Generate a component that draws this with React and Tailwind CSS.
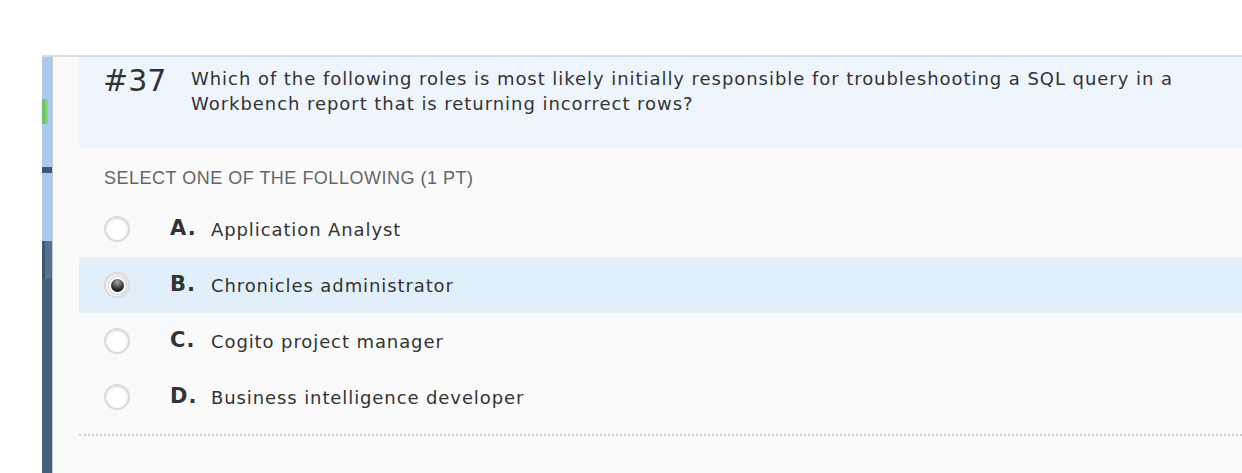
import { useState } from "react";

const options = [
  { key: "A", text: "Application Analyst" },
  { key: "B", text: "Chronicles administrator" },
  { key: "C", text: "Cogito project manager" },
  { key: "D", text: "Business intelligence developer" },
];

function Radio({ checked }) {
  return (
    <span className="flex h-[26px] w-[26px] shrink-0 items-center justify-center rounded-full border-2 border-[#dadada] bg-white shadow-[inset_0_1px_3px_rgba(0,0,0,0.15)]">
      {checked && (
        <span className="h-[13px] w-[13px] rounded-full bg-[radial-gradient(circle_at_50%_25%,#a5a5a5,#1a1a1a_70%)] shadow-[0_0_0_2px_#ffffff,0_0_0_3px_#cfcfcf]" />
      )}
    </span>
  );
}

export default function App() {
  const [selected, setSelected] = useState("B");

  return (
    <div className="h-[473px] w-[1242px] overflow-hidden bg-white font-['DejaVu_Sans',Verdana,sans-serif]">
      <div className="h-[55px]" />
      <div className="ml-[42px] flex h-[418px] border-t-2 border-[#dcdcdc]">
        {/* left rail */}
        <div className="flex w-[10px] flex-col bg-[#a9c9ee]">
          <div className="h-[42px]" />
          <div className="h-[25px] w-[6px] bg-[linear-gradient(90deg,#5fbf5a,#8ed887)]" />
          <div className="h-[43px]" />
          <div className="h-[6px] bg-[#3f5874]" />
          <div className="h-[68px]" />
          <div className="flex h-[38px]">
            <div className="w-[3px] bg-[#3e5673]" />
            <div className="flex-1 bg-[#55718f]" />
          </div>
          <div className="flex-1 bg-[#46617f]" />
        </div>
        <div className="w-px bg-[#c9c9c9]" />

        {/* main */}
        <div className="flex-1 bg-[#fafafa] pl-[26px]">
          <div className="flex h-[91px] bg-[#eef5fd] pl-[24px] pt-[5px]">
            <div className="w-[88px] text-[30px] leading-[38px] text-[#333]">#37</div>
            <p className="pt-[4px] text-[18px] leading-[25px] tracking-[0.95px] text-[#333]">
              Which of the following roles is most likely initially responsible for troubleshooting a SQL query in a
              <br />
              Workbench report that is returning incorrect rows?
            </p>
          </div>

          <div className="pl-[25px] pt-[18px] font-['Liberation_Sans',Arial,sans-serif] text-[18px] leading-[24px] tracking-[0.5px] text-[#666]">
            SELECT ONE OF THE FOLLOWING (1 PT)
          </div>

          <div className="mt-[11px]">
            {options.map((o) => (
              <div
                key={o.key}
                onClick={() => setSelected(o.key)}
                className={`flex h-[56px] cursor-pointer items-center pl-[25px] ${
                  selected === o.key ? "bg-[#e1effb]" : ""
                }`}
              >
                <Radio checked={selected === o.key} />
                <span className="ml-[40px] w-[41px] text-[21px] font-bold tracking-[1px] text-[#333]">{o.key}.</span>
                <span className="text-[18px] tracking-[0.9px] text-[#333]">{o.text}</span>
              </div>
            ))}
          </div>

          <div className="mt-[9px] border-t-2 border-dotted border-[#cccccc]" />
        </div>
      </div>
    </div>
  );
}
